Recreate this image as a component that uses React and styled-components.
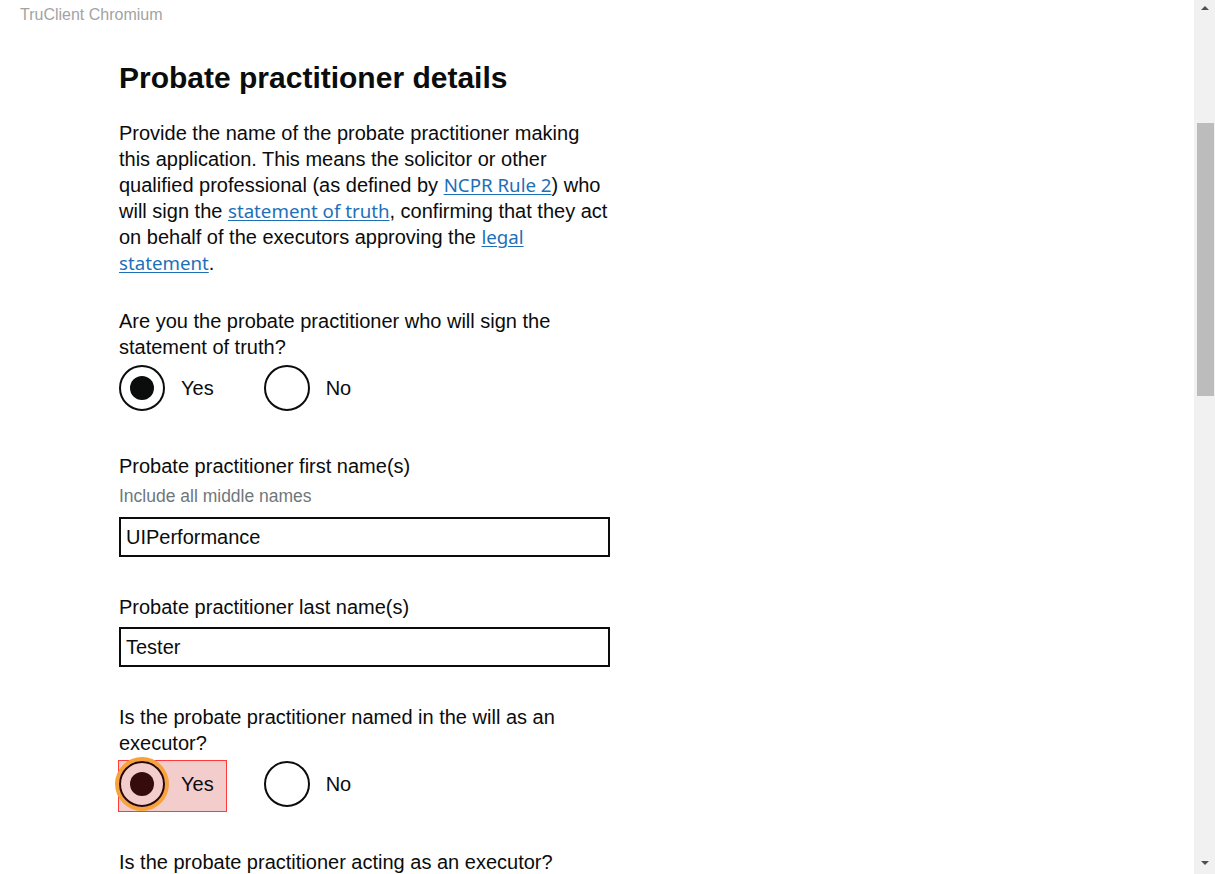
import React from "react";
import styled, { createGlobalStyle } from "styled-components";

const GlobalStyle = createGlobalStyle`
  html, body {
    margin: 0;
    padding: 0;
    background: #ffffff;
    overflow: hidden;
  }
  body {
    font-family: "Liberation Sans", Arial, sans-serif;
    color: #0b0c0c;
  }
`;

const RadioGroup = ({ selected, highlight, top }) => (
  <Radios $top={top}>
    <Option $highlight={highlight}>
      <Circle $focus={highlight} $dark={highlight}>
        {selected === "yes" && <Dot $dark={highlight} />}
      </Circle>
      <OptionLabel>Yes</OptionLabel>
    </Option>
    <Option>
      <Circle>{selected === "no" && <Dot />}</Circle>
      <OptionLabel>No</OptionLabel>
    </Option>
  </Radios>
);

const App = () => {
  return (
    <Screen>
      <GlobalStyle />
      <Page>
        <TopBar>TruClient Chromium</TopBar>
        <Main>
          <Heading>Probate practitioner details</Heading>
          <Body>
            Provide the name of the probate practitioner making this
            application. This means the solicitor or other qualified
            professional (as defined by <Link>NCPR Rule 2</Link>) who will
            sign the <Link>statement of truth</Link>, confirming that they act
            on behalf of the executors approving the{" "}
            <Link>legal statement</Link>.
          </Body>

          <Question $top={32}>
            Are you the probate practitioner who will sign the statement of
            truth?
          </Question>
          <RadioGroup selected="yes" top={5} />

          <Label $top={42}>Probate practitioner first name(s)</Label>
          <Hint>Include all middle names</Hint>
          <Input $top={10} value="UIPerformance" readOnly />

          <Label $top={37}>Probate practitioner last name(s)</Label>
          <Input $top={7} value="Tester" readOnly />

          <Question $top={37}>
            Is the probate practitioner named in the will as an executor?
          </Question>
          <RadioGroup selected="yes" highlight top={5} />

          <Question $top={42}>
            Is the probate practitioner acting as an executor?
          </Question>
        </Main>
      </Page>
      <ScrollTrack>
        <Arrow />
        <Thumb />
        <Spacer />
        <Arrow $down />
      </ScrollTrack>
    </Screen>
  );
};

export default App;

const Screen = styled.div`
  display: flex;
  width: 100vw;
  height: 100vh;
  overflow: hidden;
`;

const Page = styled.div`
  flex: 1;
  min-width: 0;
`;

const TopBar = styled.div`
  padding: 5px 20px 0;
  height: 19px;
  line-height: 20px;
  font-size: 16px;
  color: #a3a3a3;
`;

const Main = styled.div`
  width: 492px;
  margin-left: 119px;
  padding-top: 36px;
`;

const Heading = styled.h1`
  margin: 0;
  font-size: 30px;
  line-height: 35px;
  font-weight: bold;
  color: #0b0c0c;
`;

const Body = styled.p`
  margin: 25px 0 0;
  font-size: 20px;
  line-height: 26px;
`;

const Link = styled.a`
  font-family: "Noto Sans", "Open Sans", sans-serif;
  font-size: 18.7px;
  color: #1d70b8;
  text-decoration: underline;
  text-underline-offset: 2px;
  cursor: pointer;
`;

const Question = styled.div`
  margin-top: ${(p) => p.$top}px;
  font-size: 20px;
  line-height: 26px;
`;

const Radios = styled.div`
  display: flex;
  align-items: flex-start;
  margin-top: ${(p) => p.$top}px;
`;

const Option = styled.div`
  display: flex;
  align-items: flex-start;
  padding: 0 ${(p) => (p.$highlight ? "12px 4px" : "10px 0")} 0;
  margin: -1px ${(p) => (p.$highlight ? "37px -5px" : "39px -1px")} -1px;
  border: 1px solid ${(p) => (p.$highlight ? "#ff3b3b" : "transparent")};
  background: ${(p) => (p.$highlight ? "#f3cccc" : "transparent")};
`;

const Circle = styled.span`
  box-sizing: border-box;
  flex: none;
  width: 46px;
  height: 46px;
  border: 2px solid ${(p) => (p.$dark ? "#2a0707" : "#0b0c0c")};
  border-radius: 50%;
  display: flex;
  align-items: center;
  justify-content: center;
  background: ${(p) => (p.$dark ? "transparent" : "#ffffff")};
  box-shadow: ${(p) => (p.$focus ? "0 0 0 4px #f7a23a" : "none")};
`;

const Dot = styled.span`
  width: 24px;
  height: 24px;
  border-radius: 50%;
  background: ${(p) => (p.$dark ? "#360b0b" : "#0b0c0c")};
`;

const OptionLabel = styled.span`
  margin-left: 16px;
  font-size: 20px;
  line-height: 46px;
`;

const Label = styled.div`
  margin-top: ${(p) => p.$top}px;
  font-size: 20px;
  line-height: 26px;
`;

const Hint = styled.div`
  margin-top: 6px;
  font-size: 17.5px;
  line-height: 22px;
  color: #6f777b;
`;

const Input = styled.input`
  display: block;
  box-sizing: border-box;
  width: 491px;
  height: 40px;
  margin-top: ${(p) => p.$top}px;
  padding: 0 5px;
  border: 2px solid #0b0c0c;
  border-radius: 0;
  font-family: "Liberation Sans", Arial, sans-serif;
  font-size: 20px;
  color: #0b0c0c;
  outline: none;
`;

const ScrollTrack = styled.div`
  width: 21px;
  height: 100vh;
  background: #f1f1f1;
  display: flex;
  flex-direction: column;
  align-items: center;
`;

const Arrow = styled.div`
  width: 0;
  height: 0;
  margin: ${(p) => (p.$down ? "0 0 9px" : "6px 0 0")};
  border-left: 4px solid transparent;
  border-right: 4px solid transparent;
  border-bottom: ${(p) => (p.$down ? "none" : "4px solid #505050")};
  border-top: ${(p) => (p.$down ? "4px solid #505050" : "none")};
`;

const Thumb = styled.div`
  width: 17px;
  height: 273px;
  margin-top: 113px;
  margin-left: 2px;
  background: #bcbcbc;
`;

const Spacer = styled.div`
  flex: 1;
`;
